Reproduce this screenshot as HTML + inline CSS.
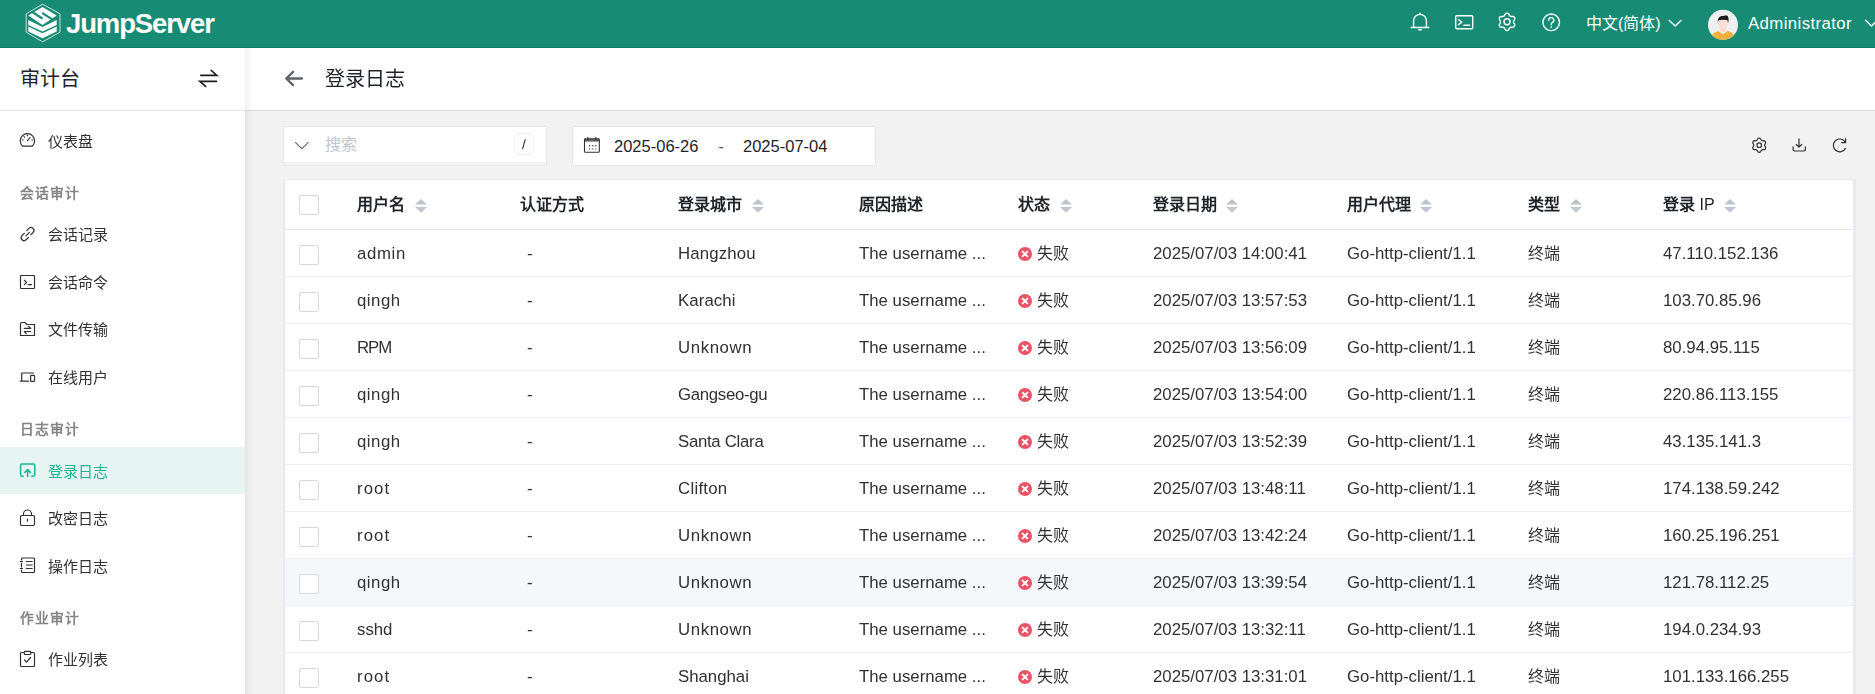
<!DOCTYPE html>
<html lang="zh-CN">
<head>
<meta charset="utf-8">
<style>
*{box-sizing:border-box;margin:0;padding:0}
html,body{width:1875px;height:694px;overflow:hidden;background:#f2f2f2;font-family:"Liberation Sans",sans-serif;color:#1f2329}
.a{position:absolute;white-space:nowrap}
svg{position:absolute;overflow:visible}
.hdr{position:absolute;left:0;top:0;width:1875px;height:48px;background:#178b74;border-bottom:1px solid #0e7d67}
.side{position:absolute;left:0;top:48px;width:245px;height:646px;background:#fff}
.sideb{position:absolute;left:0;top:110px;width:245px;height:1px;background:#e4e7ed}
.ph{position:absolute;left:245px;top:48px;width:1630px;height:63px;background:#fff;border-bottom:1px solid #dedede}
.shadow{position:absolute;left:245px;top:48px;width:9px;height:646px;background:linear-gradient(to right,rgba(0,0,0,0.06),rgba(0,0,0,0.015) 60%,rgba(0,0,0,0))}
.mi{will-change:transform;position:absolute;left:48px;font-size:15px;line-height:20px;color:#303133}
.gt{will-change:transform;position:absolute;left:20px;font-size:13.8px;line-height:20px;font-weight:bold;color:#858585;letter-spacing:0.9px}
.tbl{position:absolute;left:283px;top:179px;width:1573px;height:530px;background:#fff;border:1px solid #e6eaf2;border-left:2px solid #e6eaf4;border-right:3px solid #e6eaf4}
.th{will-change:transform;position:absolute;font-size:16px;line-height:20px;font-weight:bold;color:#1f2329;top:195px}
.row{will-change:transform;position:absolute;left:285px;width:1568px;height:47px;border-top:1px solid #ebeef5;background:#fff}
.row.h{background:#f5f7fa}
.cb{position:absolute;left:14px;top:15px;width:20px;height:20px;border:1px solid #d4d8e0;border-radius:2px;background:#fff}
.td{position:absolute;font-size:16.8px;line-height:20px;color:#303133;top:14px}
.tdc{font-size:16px;top:14px}
.icn{fill:none;stroke:#303133;stroke-width:1.3;stroke-linecap:round;stroke-linejoin:round}
</style>
</head>
<body>
<div class="hdr"></div>
<svg style="left:0;top:0" width="70" height="48" viewBox="0 0 70 48">
<path d="M42.6 4.2 L60 13.8 L60 32.2 L42.6 41.8 L26.2 32.2 L26.2 13.8Z" fill="none" stroke="#fff" stroke-width="0.9" opacity="0.85"/>
<path d="M42.5 7 L56.7 15.6 L42.5 25 L28.3 15.6Z" fill="#fff"/>
<path d="M32.6 12.2 L42.6 18.6 M42.2 12.8 L53 19.8" stroke="#178b74" stroke-width="2.2" fill="none"/>
<path d="M28.3 20 L42.5 27 L56.7 20 L56.7 25 L42.5 31.6 L28.3 25Z" fill="#fff"/>
<path d="M28.3 26.6 L42.5 33.2 L56.7 26.6 L56.7 31.4 L42.5 38.2 L28.3 31.4Z" fill="#fff"/>
</svg>
<div class="a" style="left:66px;top:6.5px;font-size:27.5px;line-height:34px;font-weight:bold;color:#fff;letter-spacing:-1.12px">JumpServer</div>
<svg style="left:1400px;top:0" width="180" height="48" viewBox="1400 0 180 48">
<path d="M1413.6 27.3 L1413.6 20.8 A6.4 6.4 0 0 1 1426.4 20.8 L1426.4 27.3" fill="none" stroke="#fff" stroke-width="1.4" stroke-linecap="round" stroke-linejoin="round"/>
<path d="M1411.2 27.5 L1428.8 27.5" fill="none" stroke="#fff" stroke-width="1.4" stroke-linecap="round" stroke-linejoin="round"/>
<path d="M1420 13.3 L1420 13.9" fill="none" stroke="#fff" stroke-width="1.4" stroke-linecap="round" stroke-linejoin="round"/>
<path d="M1418.7 29.8 L1421.3 29.8" fill="none" stroke="#fff" stroke-width="1.4" stroke-linecap="round" stroke-linejoin="round"/>
<rect x="1455.7" y="15.7" width="17" height="13" rx="1" fill="none" stroke="#fff" stroke-width="1.4" stroke-linecap="round" stroke-linejoin="round"/>
<path d="M1458.3 19.5 L1461.8 22.1 L1458.3 24.7 M1463.8 25.2 L1469.6 25.2" fill="none" stroke="#fff" stroke-width="1.4" stroke-linecap="round" stroke-linejoin="round"/>
<circle cx="1507" cy="21.8" r="3" fill="none" stroke="#fff" stroke-width="1.4" stroke-linecap="round" stroke-linejoin="round"/>
<path d="M1507.0 13.2 L1507.7 13.3 L1508.4 13.7 L1509.0 14.5 L1509.4 15.3 L1509.8 15.8 L1510.3 16.1 L1510.8 16.4 L1511.5 16.5 L1512.4 16.4 L1513.3 16.5 L1514.0 16.9 L1514.5 17.5 L1514.7 18.2 L1514.7 19.0 L1514.3 19.8 L1513.8 20.6 L1513.6 21.2 L1513.5 21.8 L1513.6 22.4 L1513.8 23.0 L1514.3 23.8 L1514.7 24.6 L1514.7 25.4 L1514.5 26.1 L1514.0 26.7 L1513.3 27.1 L1512.4 27.2 L1511.5 27.1 L1510.8 27.2 L1510.3 27.5 L1509.8 27.8 L1509.4 28.3 L1509.0 29.1 L1508.4 29.9 L1507.7 30.3 L1507.0 30.5 L1506.3 30.3 L1505.6 29.9 L1505.0 29.1 L1504.6 28.3 L1504.2 27.8 L1503.7 27.5 L1503.2 27.2 L1502.5 27.1 L1501.6 27.2 L1500.7 27.1 L1500.0 26.7 L1499.5 26.1 L1499.3 25.4 L1499.3 24.6 L1499.7 23.8 L1500.2 23.0 L1500.4 22.4 L1500.5 21.8 L1500.4 21.2 L1500.2 20.6 L1499.7 19.8 L1499.3 19.0 L1499.3 18.2 L1499.5 17.5 L1500.0 16.9 L1500.7 16.5 L1501.6 16.4 L1502.5 16.5 L1503.2 16.4 L1503.7 16.1 L1504.2 15.8 L1504.6 15.3 L1505.0 14.5 L1505.6 13.7 L1506.3 13.3Z" fill="none" stroke="#fff" stroke-width="1.4" stroke-linecap="round" stroke-linejoin="round"/>
<circle cx="1551.2" cy="22.3" r="8.3" fill="none" stroke="#fff" stroke-width="1.4" stroke-linecap="round" stroke-linejoin="round"/>
<path d="M1548.6 20.2 A2.6 2.6 0 1 1 1552.3 22.6 C1551.4 23 1551.2 23.6 1551.2 24.6" fill="none" stroke="#fff" stroke-width="1.4" stroke-linecap="round" stroke-linejoin="round"/>
<circle cx="1551.2" cy="27" r="0.5" fill="#fff" stroke="#fff" stroke-width="0.8"/>
</svg>
<div class="a" style="left:1586px;top:13px;font-size:16px;line-height:22px;color:#fff">中文(简体)</div>
<svg style="left:1660px;top:0" width="30" height="48" viewBox="1660 0 30 48"><path d="M1669.3 20.6 L1675.2 26.1 L1680.9 20.6" fill="none" stroke="#fff" stroke-width="1.4" stroke-linecap="round" stroke-linejoin="round" stroke-width="1.3"/></svg>
<svg style="left:1700px;top:0" width="50" height="48" viewBox="1700 0 50 48">
<circle cx="1723" cy="24.8" r="15" fill="#efefef"/>
<clipPath id="av"><circle cx="1723" cy="24.8" r="15"/></clipPath>
<g clip-path="url(#av)">
<path d="M1710.5 42 C1710.5 33.6 1715.5 30.6 1723 30.6 C1730.5 30.6 1735.5 33.6 1735.5 42Z" fill="#f0b13f"/>
<path d="M1720 26.5 L1726 26.5 L1726 31.2 L1723 33 L1720 31.2Z" fill="#fdd8cc"/>
<path d="M1719.3 30.3 L1723 32.9 L1726.7 30.3 L1727.6 31 L1723 34.2 L1718.4 31Z" fill="#ffffff"/>
<ellipse cx="1723" cy="24.2" rx="4.7" ry="5.4" fill="#fde0d5"/>
<path d="M1717.9 23.2 C1717.3 17.8 1719.6 15.9 1723 16.1 C1725.3 15.3 1728 15.4 1728.1 17 C1728.9 18.8 1728.7 21.2 1728 23.2 L1727.5 20.2 C1725 19.5 1721 19.5 1718.5 20.2Z" fill="#1c1c1c"/>
</g>
</svg>
<div class="a" style="left:1748px;top:13px;font-size:16.8px;line-height:22px;color:#fff;letter-spacing:0.39px">Administrator</div>
<svg style="left:1860px;top:0" width="15" height="48" viewBox="1860 0 15 48"><path d="M1865.5 20.2 L1871.5 26 L1877.5 20.2" fill="none" stroke="#fff" stroke-width="1.4" stroke-linecap="round" stroke-linejoin="round"/></svg>
<div class="side"></div>
<div class="sideb"></div>
<div class="a" style="left:20px;top:65px;font-size:20px;line-height:28px;color:#1f2329">审计台</div>
<svg style="left:195px;top:65px" width="28" height="28" viewBox="195 65 28 28"><path d="M200.8 75.4 L216.8 75.4 L211.2 70.4 M216.5 81.4 L199.8 81.4 L205.6 86.4" fill="none" stroke="#1f1f1f" stroke-width="1.6" stroke-linecap="round" stroke-linejoin="miter"/></svg>
<div class="a" style="left:0;top:447px;width:245px;height:47px;background:#e6f5f1"></div>
<svg style="left:0;top:0" width="245" height="694" viewBox="0 0 245 694">
<path d="M22.6 146.2 A7.2 7.2 0 1 1 32.2 146.2Z" fill="none" stroke="#303133" stroke-width="1.2" stroke-linecap="round" stroke-linejoin="round"/>
<path d="M27.4 140.6 L30 137.6" fill="none" stroke="#303133" stroke-width="1.2" stroke-linecap="round" stroke-linejoin="round" stroke-width="1.6"/>
<path d="M27.4 135.2 L27.4 135.8 M22.5 140 L23.2 140 M31.8 140 L32.5 140 M24 136.6 L24.4 137" fill="none" stroke="#303133" stroke-width="1.2" stroke-linecap="round" stroke-linejoin="round"/>
<path d="M26.8 230.6 L29 228.4 A2.9 2.9 0 0 1 33.1 232.5 L30.9 234.7 M24.3 233.4 L22 235.7 A2.9 2.9 0 0 0 26.1 239.8 L28.4 237.5 M26 235.8 L29.4 232.4" fill="none" stroke="#303133" stroke-width="1.2" stroke-linecap="round" stroke-linejoin="round" stroke-width="1.4"/>
<rect x="20.5" y="275.5" width="14" height="13" rx="0.8" fill="none" stroke="#303133" stroke-width="1.2" stroke-linecap="round" stroke-linejoin="round"/>
<path d="M24.3 280.3 L26.6 282.4 L24.3 284.6 M28.2 284.6 L31.6 284.6" fill="none" stroke="#303133" stroke-width="1.2" stroke-linecap="round" stroke-linejoin="round"/>
<path d="M20.5 335.5 L20.5 323.5 Q20.5 322.5 21.5 322.5 L25 322.5 L26.8 324.5 L34.5 324.5 L34.5 335.5Z" fill="none" stroke="#303133" stroke-width="1.2" stroke-linecap="round" stroke-linejoin="round"/>
<path d="M24.3 328.4 L30.7 328.4 L28.6 326.4 M30.7 331.5 L24.3 331.5 L26.4 333.6" fill="none" stroke="#303133" stroke-width="1.2" stroke-linecap="round" stroke-linejoin="round"/>
<path d="M21.7 380.6 L21.7 373 L33.6 373 M20.3 381.2 L28.4 381.2" fill="none" stroke="#303133" stroke-width="1.2" stroke-linecap="round" stroke-linejoin="round"/>
<rect x="30.6" y="375.4" width="3.9" height="6" rx="0.6" fill="none" stroke="#303133" stroke-width="1.2" stroke-linecap="round" stroke-linejoin="round"/>
<path d="M23.2 476.2 L22 476.2 Q20.6 476.2 20.6 474.8 L20.6 465.4 Q20.6 464 22 464 L33.4 464 Q34.8 464 34.8 465.4 L34.8 474.8 Q34.8 476.2 33.4 476.2 L31.8 476.2 M27.6 476.4 L27.6 469.8 M24.8 472.4 L27.6 469.6 L30.4 472.4" fill="none" stroke="#1ab394" stroke-width="1.5" stroke-linecap="round" stroke-linejoin="round" stroke-width="1.3"/>
<rect x="20.5" y="515.5" width="14" height="10" rx="1.2" fill="none" stroke="#303133" stroke-width="1.2" stroke-linecap="round" stroke-linejoin="round"/>
<path d="M23.5 515.5 L23.5 514 A4 4 0 0 1 31.5 514 L31.5 515.5 M27.5 519.2 L27.5 521.2" fill="none" stroke="#303133" stroke-width="1.2" stroke-linecap="round" stroke-linejoin="round"/>
<path d="M21.5 560 L21.5 558.5 Q21.5 558 22.5 558 L33.5 558 Q34.5 558 34.5 559 L34.5 571.5 Q34.5 572.5 33.5 572.5 L22.5 572.5 Q21.5 572.5 21.5 571.5 L21.5 570 M21.5 563 L21.5 567 M20.2 561.5 L22.6 561.5 M20.2 568.5 L22.6 568.5 M26.4 561.5 L32.2 561.5 M26.4 565 L32.2 565 M26.4 568.5 L32.2 568.5" fill="none" stroke="#303133" stroke-width="1.2" stroke-linecap="round" stroke-linejoin="round"/>
<path d="M24 652.5 L21.5 652.5 Q20.5 652.5 20.5 653.5 L20.5 665.5 Q20.5 666.5 21.5 666.5 L33.5 666.5 Q34.5 666.5 34.5 665.5 L34.5 653.5 Q34.5 652.5 33.5 652.5 L31 652.5" fill="none" stroke="#303133" stroke-width="1.2" stroke-linecap="round" stroke-linejoin="round"/>
<rect x="24.3" y="651.3" width="6.6" height="3.2" rx="1" fill="none" stroke="#303133" stroke-width="1.2" stroke-linecap="round" stroke-linejoin="round"/>
<path d="M24.4 659.9 L26.4 662.2 L30.6 657.5" fill="none" stroke="#303133" stroke-width="1.2" stroke-linecap="round" stroke-linejoin="round"/>
</svg>
<div class="mi" style="top:132px">仪表盘</div>
<div class="gt" style="top:183.5px">会话审计</div>
<div class="mi" style="top:225px">会话记录</div>
<div class="mi" style="top:273px">会话命令</div>
<div class="mi" style="top:320px">文件传输</div>
<div class="mi" style="top:368px">在线用户</div>
<div class="gt" style="top:419.5px">日志审计</div>
<div class="mi" style="top:462px;color:#1ab394">登录日志</div>
<div class="mi" style="top:509px">改密日志</div>
<div class="mi" style="top:557px">操作日志</div>
<div class="gt" style="top:608.5px">作业审计</div>
<div class="mi" style="top:650px">作业列表</div>
<div class="ph"></div>
<div class="shadow"></div>
<svg style="left:280px;top:65px" width="30" height="28" viewBox="280 65 30 28"><path d="M302 78.5 L286.5 78.5 M293.1 71.8 L286.2 78.5 L293.1 85.2" fill="none" stroke="#5f6266" stroke-width="2.3" stroke-linecap="round" stroke-linejoin="round"/></svg>
<div class="a" style="will-change:transform;left:325px;top:64px;font-size:20px;line-height:30px;color:#1f2329">登录日志</div>
<div class="a" style="left:283px;top:126px;width:264px;height:40px;background:#f2f2f2;border:1px solid #e4e7ed;border-radius:2px"></div>
<div class="a" style="left:284px;top:127px;width:262px;height:35px;background:#fff"></div>
<svg style="left:290px;top:135px" width="24" height="20" viewBox="290 135 24 20"><path d="M295.6 142.6 L301.9 148.6 L308.2 142.6" fill="none" stroke="#6a6a6a" stroke-width="1.2" stroke-linecap="round" stroke-linejoin="miter"/></svg>
<div class="a" style="left:325px;top:134px;font-size:16px;line-height:22px;color:#c0c4cc">搜索</div>
<div class="a" style="left:514px;top:133px;width:20px;height:22px;border:1px solid #f0f2f6;border-radius:6px;background:#fff"></div>
<svg style="left:514px;top:133px" width="20" height="22" viewBox="514 133 20 22"><path d="M525.2 139.6 L522.6 148.8" fill="none" stroke="#303133" stroke-width="1.1" stroke-linecap="round"/></svg>
<div class="a" style="left:572px;top:126px;width:304px;height:40px;background:#fff;border:1px solid #e2e5eb;border-radius:3px"></div>
<svg style="left:580px;top:130px" width="26" height="30" viewBox="580 130 26 30"><rect x="584.5" y="138.9" width="14.8" height="13.4" rx="0.8" fill="none" stroke="#303133" stroke-width="1.1"/><path d="M584.5 139.2 L599.3 139.2 L599.3 141.6 L584.5 141.6Z" fill="#303133" opacity="0.75"/><path d="M587.8 137 L587.8 140.2 M595.8 137 L595.8 140.2" stroke="#303133" stroke-width="1.1" fill="none"/><path d="M589 145.6 L590.2 145.6 M592.2 145.6 L593.4 145.6 M595.2 145.6 L596.4 145.6 M589 149 L590.2 149 M592.2 149 L593.4 149 M595.2 149 L596.4 149" stroke="#303133" stroke-width="1.1" fill="none"/></svg>
<div class="a" style="left:614px;top:135px;font-size:16.5px;line-height:22px;color:#1f2329">2025-06-26</div>
<div class="a" style="left:718.5px;top:135.5px;font-size:16px;line-height:22px;color:#505256">-</div>
<div class="a" style="left:743px;top:135px;font-size:16.5px;line-height:22px;color:#1f2329">2025-07-04</div>
<svg style="left:1745px;top:130px" width="110" height="30" viewBox="1745 130 110 30">
<circle cx="1759.2" cy="145.2" r="2.3" fill="none" stroke="#303133" stroke-width="1.2" stroke-linecap="round" stroke-linejoin="round" stroke-width="1.6"/>
<path d="M1759.2 138.0 L1759.8 138.2 L1760.4 138.5 L1760.8 139.1 L1761.2 139.8 L1761.5 140.2 L1761.9 140.5 L1762.4 140.7 L1762.9 140.8 L1763.7 140.7 L1764.4 140.8 L1765.0 141.1 L1765.4 141.6 L1765.6 142.2 L1765.6 142.9 L1765.3 143.6 L1764.9 144.2 L1764.7 144.7 L1764.7 145.2 L1764.7 145.7 L1764.9 146.2 L1765.3 146.8 L1765.6 147.5 L1765.6 148.2 L1765.4 148.8 L1765.0 149.3 L1764.4 149.6 L1763.7 149.7 L1762.9 149.6 L1762.4 149.7 L1761.9 149.9 L1761.5 150.2 L1761.2 150.6 L1760.8 151.3 L1760.4 151.9 L1759.8 152.2 L1759.2 152.3 L1758.6 152.2 L1758.0 151.9 L1757.6 151.3 L1757.2 150.6 L1756.9 150.2 L1756.5 149.9 L1756.0 149.7 L1755.5 149.6 L1754.7 149.7 L1754.0 149.6 L1753.4 149.3 L1753.0 148.8 L1752.8 148.2 L1752.8 147.5 L1753.1 146.8 L1753.5 146.2 L1753.7 145.7 L1753.8 145.2 L1753.7 144.7 L1753.5 144.2 L1753.1 143.6 L1752.8 142.9 L1752.8 142.2 L1753.0 141.6 L1753.4 141.1 L1754.0 140.8 L1754.7 140.7 L1755.5 140.8 L1756.0 140.7 L1756.5 140.5 L1756.9 140.2 L1757.2 139.8 L1757.6 139.1 L1758.0 138.5 L1758.6 138.2Z" fill="none" stroke="#303133" stroke-width="1.2" stroke-linecap="round" stroke-linejoin="round" stroke-width="1.6"/>
<path d="M1799 138.8 L1799 147.2 M1796.3 144.5 L1799 147.2 L1801.7 144.5 M1793.1 146.8 L1793.1 149.6 Q1793.1 151 1794.5 151 L1804 151 Q1805.4 151 1805.4 149.6 L1805.4 146.8" fill="none" stroke="#303133" stroke-width="1.2" stroke-linecap="round" stroke-linejoin="round" stroke-width="1.7"/>
<path d="M1844.9 141.6 A6.4 6.4 0 1 0 1845.4 148.4 M1845.6 138.7 L1845.6 142.6 L1841.6 142.6" fill="none" stroke="#303133" stroke-width="1.2" stroke-linecap="round" stroke-linejoin="round" stroke-width="1.7"/>
</svg>
<div class="tbl"></div>
<div class="a" style="left:299px;top:195px;width:20px;height:20px;border:1px solid #d4d8e0;border-radius:2px;background:#fff"></div>
<div class="th" style="left:357px">用户名</div>
<svg style="left:415.3px;top:198px" width="12" height="16" viewBox="0 0 12 16"><path d="M0 6.6 L6 0.9 L12 6.6Z M0 9.0 L6 14.7 L12 9.0Z" fill="#c0c4cc"/></svg><div class="th" style="left:520px">认证方式</div>
<div class="th" style="left:678px">登录城市</div>
<svg style="left:752.3px;top:198px" width="12" height="16" viewBox="0 0 12 16"><path d="M0 6.6 L6 0.9 L12 6.6Z M0 9.0 L6 14.7 L12 9.0Z" fill="#c0c4cc"/></svg><div class="th" style="left:859px">原因描述</div>
<div class="th" style="left:1018px">状态</div>
<svg style="left:1060.3px;top:198px" width="12" height="16" viewBox="0 0 12 16"><path d="M0 6.6 L6 0.9 L12 6.6Z M0 9.0 L6 14.7 L12 9.0Z" fill="#c0c4cc"/></svg><div class="th" style="left:1153px">登录日期</div>
<svg style="left:1226.3px;top:198px" width="12" height="16" viewBox="0 0 12 16"><path d="M0 6.6 L6 0.9 L12 6.6Z M0 9.0 L6 14.7 L12 9.0Z" fill="#c0c4cc"/></svg><div class="th" style="left:1347px">用户代理</div>
<svg style="left:1420.3px;top:198px" width="12" height="16" viewBox="0 0 12 16"><path d="M0 6.6 L6 0.9 L12 6.6Z M0 9.0 L6 14.7 L12 9.0Z" fill="#c0c4cc"/></svg><div class="th" style="left:1528px">类型</div>
<svg style="left:1570.3px;top:198px" width="12" height="16" viewBox="0 0 12 16"><path d="M0 6.6 L6 0.9 L12 6.6Z M0 9.0 L6 14.7 L12 9.0Z" fill="#c0c4cc"/></svg><div class="th" style="left:1663px">登录 <span style="font-weight:normal">IP</span></div>
<svg style="left:1724.3px;top:198px" width="12" height="16" viewBox="0 0 12 16"><path d="M0 6.6 L6 0.9 L12 6.6Z M0 9.0 L6 14.7 L12 9.0Z" fill="#c0c4cc"/></svg><div class="row" style="top:229px"><div class="cb"></div><div class="td" style="left:72px;letter-spacing:0.65px">admin</div><div class="td" style="left:242px">-</div><div class="td" style="left:393px;letter-spacing:0.14px">Hangzhou</div><div class="td" style="left:574px">The username ...</div><svg style="left:733px;top:17px" width="15" height="15" viewBox="0 0 15 15"><circle cx="7" cy="7" r="7" fill="#ea5267"/><path d="M4.6 4.6 L9.4 9.4 M9.4 4.6 L4.6 9.4" stroke="#fff" stroke-width="2" stroke-linecap="round"/></svg><div class="td tdc" style="left:752px">失败</div><div class="td" style="left:868px">2025/07/03 14:00:41</div><div class="td" style="left:1062px">Go-http-client/1.1</div><div class="td tdc" style="left:1243px">终端</div><div class="td" style="left:1378px">47.110.152.136</div></div>
<div class="row" style="top:276px"><div class="cb"></div><div class="td" style="left:72px;letter-spacing:0.5px">qingh</div><div class="td" style="left:242px">-</div><div class="td" style="left:393px;letter-spacing:0.1px">Karachi</div><div class="td" style="left:574px">The username ...</div><svg style="left:733px;top:17px" width="15" height="15" viewBox="0 0 15 15"><circle cx="7" cy="7" r="7" fill="#ea5267"/><path d="M4.6 4.6 L9.4 9.4 M9.4 4.6 L4.6 9.4" stroke="#fff" stroke-width="2" stroke-linecap="round"/></svg><div class="td tdc" style="left:752px">失败</div><div class="td" style="left:868px">2025/07/03 13:57:53</div><div class="td" style="left:1062px">Go-http-client/1.1</div><div class="td tdc" style="left:1243px">终端</div><div class="td" style="left:1378px">103.70.85.96</div></div>
<div class="row" style="top:323px"><div class="cb"></div><div class="td" style="left:72px;letter-spacing:-1.0px">RPM</div><div class="td" style="left:242px">-</div><div class="td" style="left:393px;letter-spacing:0.6px">Unknown</div><div class="td" style="left:574px">The username ...</div><svg style="left:733px;top:17px" width="15" height="15" viewBox="0 0 15 15"><circle cx="7" cy="7" r="7" fill="#ea5267"/><path d="M4.6 4.6 L9.4 9.4 M9.4 4.6 L4.6 9.4" stroke="#fff" stroke-width="2" stroke-linecap="round"/></svg><div class="td tdc" style="left:752px">失败</div><div class="td" style="left:868px">2025/07/03 13:56:09</div><div class="td" style="left:1062px">Go-http-client/1.1</div><div class="td tdc" style="left:1243px">终端</div><div class="td" style="left:1378px">80.94.95.115</div></div>
<div class="row" style="top:370px"><div class="cb"></div><div class="td" style="left:72px;letter-spacing:0.5px">qingh</div><div class="td" style="left:242px">-</div><div class="td" style="left:393px;letter-spacing:-0.3px">Gangseo-gu</div><div class="td" style="left:574px">The username ...</div><svg style="left:733px;top:17px" width="15" height="15" viewBox="0 0 15 15"><circle cx="7" cy="7" r="7" fill="#ea5267"/><path d="M4.6 4.6 L9.4 9.4 M9.4 4.6 L4.6 9.4" stroke="#fff" stroke-width="2" stroke-linecap="round"/></svg><div class="td tdc" style="left:752px">失败</div><div class="td" style="left:868px">2025/07/03 13:54:00</div><div class="td" style="left:1062px">Go-http-client/1.1</div><div class="td tdc" style="left:1243px">终端</div><div class="td" style="left:1378px">220.86.113.155</div></div>
<div class="row" style="top:417px"><div class="cb"></div><div class="td" style="left:72px;letter-spacing:0.5px">qingh</div><div class="td" style="left:242px">-</div><div class="td" style="left:393px;letter-spacing:-0.29px">Santa Clara</div><div class="td" style="left:574px">The username ...</div><svg style="left:733px;top:17px" width="15" height="15" viewBox="0 0 15 15"><circle cx="7" cy="7" r="7" fill="#ea5267"/><path d="M4.6 4.6 L9.4 9.4 M9.4 4.6 L4.6 9.4" stroke="#fff" stroke-width="2" stroke-linecap="round"/></svg><div class="td tdc" style="left:752px">失败</div><div class="td" style="left:868px">2025/07/03 13:52:39</div><div class="td" style="left:1062px">Go-http-client/1.1</div><div class="td tdc" style="left:1243px">终端</div><div class="td" style="left:1378px">43.135.141.3</div></div>
<div class="row" style="top:464px"><div class="cb"></div><div class="td" style="left:72px;letter-spacing:1.1px">root</div><div class="td" style="left:242px">-</div><div class="td" style="left:393px;letter-spacing:0.27px">Clifton</div><div class="td" style="left:574px">The username ...</div><svg style="left:733px;top:17px" width="15" height="15" viewBox="0 0 15 15"><circle cx="7" cy="7" r="7" fill="#ea5267"/><path d="M4.6 4.6 L9.4 9.4 M9.4 4.6 L4.6 9.4" stroke="#fff" stroke-width="2" stroke-linecap="round"/></svg><div class="td tdc" style="left:752px">失败</div><div class="td" style="left:868px">2025/07/03 13:48:11</div><div class="td" style="left:1062px">Go-http-client/1.1</div><div class="td tdc" style="left:1243px">终端</div><div class="td" style="left:1378px">174.138.59.242</div></div>
<div class="row" style="top:511px"><div class="cb"></div><div class="td" style="left:72px;letter-spacing:1.1px">root</div><div class="td" style="left:242px">-</div><div class="td" style="left:393px;letter-spacing:0.6px">Unknown</div><div class="td" style="left:574px">The username ...</div><svg style="left:733px;top:17px" width="15" height="15" viewBox="0 0 15 15"><circle cx="7" cy="7" r="7" fill="#ea5267"/><path d="M4.6 4.6 L9.4 9.4 M9.4 4.6 L4.6 9.4" stroke="#fff" stroke-width="2" stroke-linecap="round"/></svg><div class="td tdc" style="left:752px">失败</div><div class="td" style="left:868px">2025/07/03 13:42:24</div><div class="td" style="left:1062px">Go-http-client/1.1</div><div class="td tdc" style="left:1243px">终端</div><div class="td" style="left:1378px">160.25.196.251</div></div>
<div class="row h" style="top:558px"><div class="cb"></div><div class="td" style="left:72px;letter-spacing:0.5px">qingh</div><div class="td" style="left:242px">-</div><div class="td" style="left:393px;letter-spacing:0.6px">Unknown</div><div class="td" style="left:574px">The username ...</div><svg style="left:733px;top:17px" width="15" height="15" viewBox="0 0 15 15"><circle cx="7" cy="7" r="7" fill="#ea5267"/><path d="M4.6 4.6 L9.4 9.4 M9.4 4.6 L4.6 9.4" stroke="#fff" stroke-width="2" stroke-linecap="round"/></svg><div class="td tdc" style="left:752px">失败</div><div class="td" style="left:868px">2025/07/03 13:39:54</div><div class="td" style="left:1062px">Go-http-client/1.1</div><div class="td tdc" style="left:1243px">终端</div><div class="td" style="left:1378px">121.78.112.25</div></div>
<div class="row" style="top:605px"><div class="cb"></div><div class="td" style="left:72px;letter-spacing:0px">sshd</div><div class="td" style="left:242px">-</div><div class="td" style="left:393px;letter-spacing:0.6px">Unknown</div><div class="td" style="left:574px">The username ...</div><svg style="left:733px;top:17px" width="15" height="15" viewBox="0 0 15 15"><circle cx="7" cy="7" r="7" fill="#ea5267"/><path d="M4.6 4.6 L9.4 9.4 M9.4 4.6 L4.6 9.4" stroke="#fff" stroke-width="2" stroke-linecap="round"/></svg><div class="td tdc" style="left:752px">失败</div><div class="td" style="left:868px">2025/07/03 13:32:11</div><div class="td" style="left:1062px">Go-http-client/1.1</div><div class="td tdc" style="left:1243px">终端</div><div class="td" style="left:1378px">194.0.234.93</div></div>
<div class="row" style="top:652px"><div class="cb"></div><div class="td" style="left:72px;letter-spacing:1.1px">root</div><div class="td" style="left:242px">-</div><div class="td" style="left:393px;letter-spacing:0px">Shanghai</div><div class="td" style="left:574px">The username ...</div><svg style="left:733px;top:17px" width="15" height="15" viewBox="0 0 15 15"><circle cx="7" cy="7" r="7" fill="#ea5267"/><path d="M4.6 4.6 L9.4 9.4 M9.4 4.6 L4.6 9.4" stroke="#fff" stroke-width="2" stroke-linecap="round"/></svg><div class="td tdc" style="left:752px">失败</div><div class="td" style="left:868px">2025/07/03 13:31:01</div><div class="td" style="left:1062px">Go-http-client/1.1</div><div class="td tdc" style="left:1243px">终端</div><div class="td" style="left:1378px">101.133.166.255</div></div>
<div class="a" style="left:285px;top:229px;width:1568px;height:1px;background:#e6e8ee"></div>
</body>
</html>
